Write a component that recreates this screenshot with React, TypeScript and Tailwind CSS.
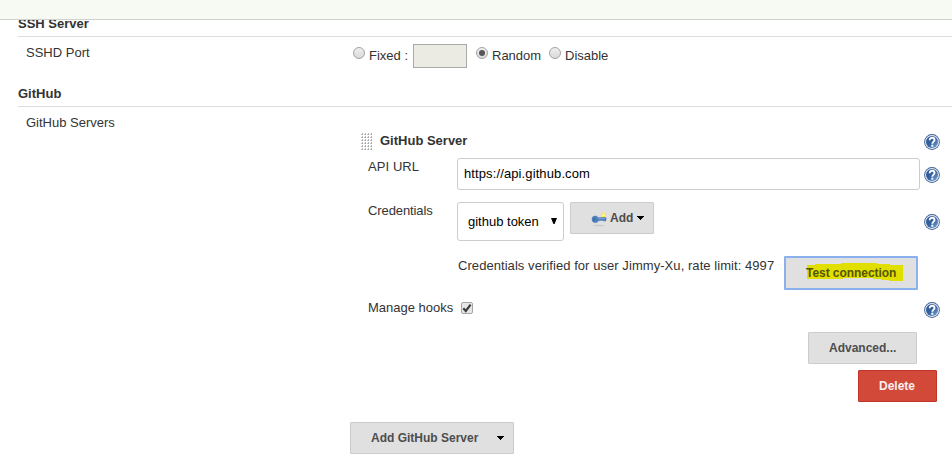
import type { ReactNode } from "react";

function Help({ className = "" }: { className?: string }) {
  return (
    <svg className={`size-4 shrink-0 ${className}`} viewBox="0 0 16 16">
      <defs>
        <linearGradient id="help" x1="0" y1="0" x2="1" y2="1">
          <stop offset="0" stopColor="#2c5592" />
          <stop offset="0.5" stopColor="#35619f" />
          <stop offset="1" stopColor="#7fa6d6" />
        </linearGradient>
      </defs>
      <circle cx="8" cy="8" r="7.9" fill="#3d6299" />
      <circle cx="8" cy="8" r="7" fill="#e4ecf6" />
      <circle cx="8" cy="8" r="6" fill="url(#help)" />
      <path d="M5.7 6.2C5.7 4.500 6.700 3.800 8.100 3.800s2.400.8 2.400 2.200c0 1.600-2.200 1.700-2.200 3.800" fill="none" stroke="#fff" strokeWidth="1.900" />
      <rect x="7.300" y="10.700" width="2" height="2" fill="#fff" />
    </svg>
  );
}

function Radio({ checked = false, className = "" }: { checked?: boolean; className?: string }) {
  return (
    <span role="radio" aria-checked={checked} className={`flex size-3 shrink-0 items-center justify-center rounded-full border border-[#a3a3a3] bg-linear-to-b from-[#efefef] to-[#d9d9d9] ${className}`}>
      {checked && <span className="size-1.5 rounded-full bg-[#555]" />}
    </span>
  );
}

function Caret({ className = "" }: { className?: string }) {
  return (
    <svg className={`h-1 w-[7px] shrink-0 ${className}`} viewBox="0 0 7 4" shapeRendering="crispEdges">
      <path d="M0 0h7v1H6v1H5v1H4v1H3V3H2V2H1V1H0z" fill="#000" />
    </svg>
  );
}

function Button({ children, className }: { children: ReactNode; className: string }) {
  return (
    <button className={`flex shrink-0 rounded-[1px] border text-[12px] leading-4 font-bold whitespace-nowrap ${className}`}>
      {children}
    </button>
  );
}

function Key() {
  return (
    <svg className="mt-2 ml-5 h-4 w-4 shrink-0" viewBox="0 0 16 16">
      <ellipse cx="8" cy="14.5" rx="6" ry="0.8" fill="#c9c9c9" />
      <circle cx="12.500" cy="4.200" r="2.500" fill="#f7e64d" />
      <circle cx="12.500" cy="4.200" r="1.100" fill="#fffbc2" />
      <path d="M1 8.200Q1 5 4.300 5q2 0 3 1.700l7.200-.3.7 1.100-.5 2.600h-1.200l-.5-.9-1 .9-.8-.9-3.500.4q-1 2-3.200 2Q1 11.600 1 8.200Z" fill="#4d80bd" stroke="#3c6ca8" strokeWidth=".5" />
      <path d="M7 7.600h7" stroke="#83abd9" strokeWidth=".8" />
      <circle cx="3.400" cy="8.300" r="1.100" fill="#3a689f" />
    </svg>
  );
}

export default function App() {
  return (
    <div className="h-[464px] w-[952px] overflow-hidden bg-white font-['Liberation_Sans',Arial,sans-serif] text-[13px] leading-4 whitespace-nowrap text-[#333]">
      <header className="relative z-10 h-5 border-b border-[#cfd3cc] bg-[#f6faf2]" />
      <h2 className="-mt-1 ml-[18px] h-[21px] border-b border-[#ddd] font-bold">SSH Server</h2>
      <section className="flex h-[47px] items-start">
        <span className="mt-2 ml-[26px] w-[327px]">SSHD Port</span>
        <Radio className="mt-2.5" />
        <span className="mt-[11px] ml-1 w-11">Fixed :</span>
        <span className="mt-[7px] h-6 w-[54px] border border-[#a9a9a9] bg-[#ebebe4]" />
        <Radio checked className="mt-2.5 ml-[9px]" />
        <span className="mt-[11px] ml-1 w-[57px]">Random</span>
        <Radio className="mt-2.5" />
        <span className="mt-[11px] ml-1">Disable</span>
      </section>
      <h2 className="ml-[18px] h-[23px] border-b border-[#ddd] pt-0.5 font-bold">GitHub</h2>
      <section className="flex">
        <div className="w-[350px] shrink-0 pt-2 pl-[26px]">GitHub Servers</div>
        <div className="w-[602px] shrink-0">
          <div className="flex h-[51px] items-start">
            <svg className="mt-[26px] ml-[11px] h-[18px] w-3 shrink-0" shapeRendering="crispEdges">
              <defs>
                <pattern id="grip" width="3" height="3" patternUnits="userSpaceOnUse">
                  <rect x="1" width="1" height="1" fill="#b5b5b5" />
                  <rect y="1" width="1" height="1" fill="#c6c6c6" />
                  <rect x="1" y="1" width="1" height="1" fill="#a5a5a5" />
                </pattern>
              </defs>
              <rect width="12" height="18" fill="url(#grip)" />
            </svg>
            <span className="mt-[26px] ml-[7px] w-[544px] font-bold">GitHub Server</span>
            <Help className="mt-[27px]" />
          </div>
          <div className="flex h-11 items-start">
            <span className="mt-px ml-[18px] w-[89px] tracking-[0.08px]">API URL</span>
            <div className="h-8 w-[463px] rounded-[3px] border border-[#ccc] pt-[7px] pl-1.5 tracking-[0.11px] text-black">https://api.github.com</div>
            <Help className="mt-[9px] ml-1" />
          </div>
          <div className="flex h-[54px] items-start">
            <span className="mt-px ml-[18px] w-[89px] tracking-[-0.1px]">Credentials</span>
            <div className="flex h-[39px] w-[107px] rounded-[3px] border border-[#ccc] pt-[11px] pl-2.5 text-black">
              <span className="w-[83px]">github token</span>
              <svg className="mt-1 h-[6px] w-[6px]" viewBox="0 0 6 6"><path d="M0 0h6L3.600 6H2.400z" /></svg>
            </div>
            <Button className="ml-1.5 h-8 w-[84px] border-[#ccc] bg-[#e0e0e0] text-[#4d4d4d]">
              <Key />
              <span className="mt-[7px] ml-[3px] w-[27px] text-left">Add</span>
              <Caret className="mt-[13px]" />
            </Button>
            <Help className="mt-3 ml-[270px]" />
          </div>
          <div className="flex h-[43px] items-start">
            <span className="mt-0.5 ml-[108px] w-[326px] tracking-[0.06px]">Credentials verified for user Jimmy-Xu, rate limit: 4997</span>
            <Button className="relative h-[34px] w-[134px] border-2 border-[#8ab0ed] bg-[#e0e0e0] pt-[7px] pl-5 text-[#555500]">
              <svg className="absolute top-[5px] left-5 h-[20px] w-[98px]" viewBox="0 0 98 20">
                <path d="M1 2h8V1h26V0h36v1h13v1h13v16H83v-1h-8v-1h-8v-1H37v1H1z" fill="#e1df00" />
              </svg>
              <span className="relative tracking-[-0.05px]">Test connection</span>
            </Button>
          </div>
          <div className="flex h-[33px] items-start">
            <span className="mt-px ml-[18px] w-[93px]">Manage hooks</span>
            <span role="checkbox" aria-checked="true" className="mt-[3px] flex size-3 items-center justify-center rounded-[2px] border border-[#a5a5a5] bg-[#e6e6e6]">
              <svg className="size-2.5" viewBox="0 0 10 10"><path d="m1.300 5.300 2.500 2.700L8.600 1.600" fill="none" stroke="#3d3d3d" strokeWidth="2.200" /></svg>
            </span>
            <Help className="mt-[3px] ml-[451px]" />
          </div>
          <Button className="ml-[458px] h-8 w-[109px] border-[#ccc] bg-[#e0e0e0] pt-[7px] pl-5 text-[#4d4d4d]">Advanced...</Button>
          <Button className="mt-1.5 ml-[508px] h-8 w-[79px] border-[#c03527] bg-[#d24939] pt-[7px] pl-5 text-[#f7f0ef]">Delete</Button>
          <Button className="mt-5 h-8 w-[164px] border-[#ccc] bg-[#e0e0e0] pt-[7px] pl-5 text-[#4d4d4d]">
            <span className="w-[126px] text-left">Add GitHub Server</span>
            <Caret className="mt-[6px]" />
          </Button>
        </div>
      </section>
    </div>
  );
}
